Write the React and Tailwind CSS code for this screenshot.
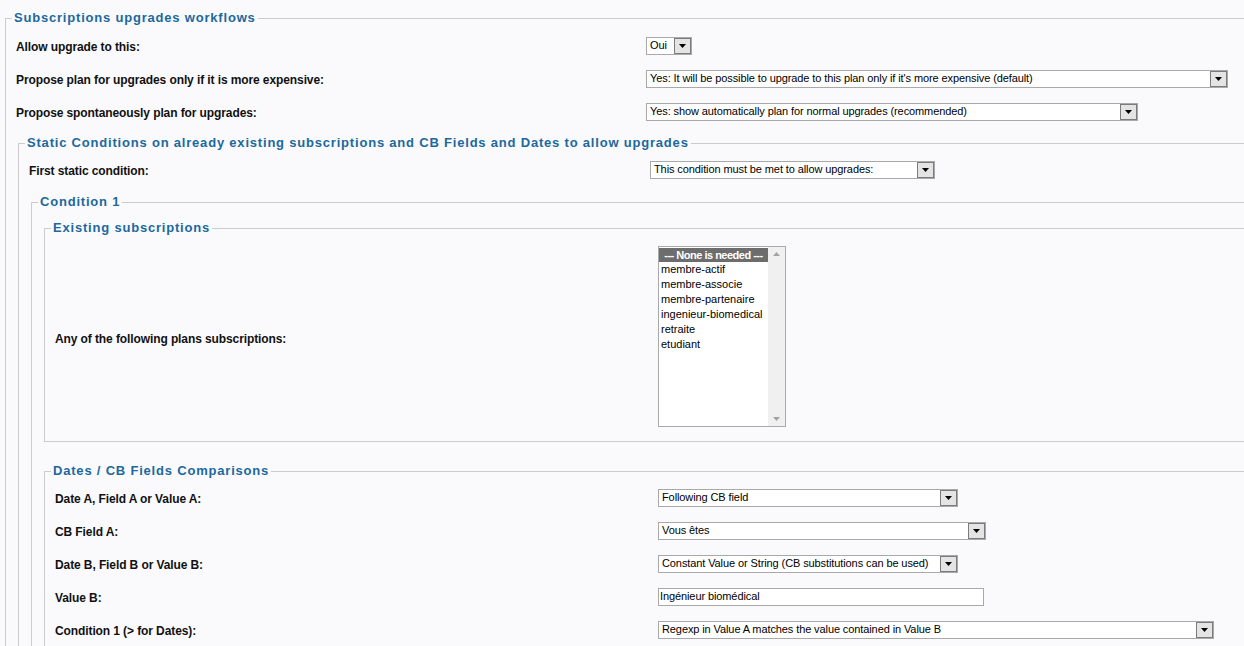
import React from 'react';

const Arrow = () => (
  <div className="absolute right-0 top-0 h-[16px] w-[17px] border border-[#7b7b7b] bg-[#e4e4e4] flex items-center justify-center">
    <svg width="7" height="4" viewBox="0 0 7 4"><polygon points="0,0 7,0 3.5,4" fill="#000" /></svg>
  </div>
);

const Select = ({ className, children }) => (
  <div className={`relative h-[18px] border border-[#a9a9a9] bg-white flex items-center pl-[3px] text-[11px] tracking-[-0.1px] text-black ${className}`}>
    <span className="whitespace-nowrap">{children}</span>
    <Arrow />
  </div>
);

const Row = ({ label, labelW, children }) => (
  <div className="flex items-center h-[33px]">
    <div className={`pl-[10px] pt-[2px] shrink-0 text-[12px] font-bold tracking-[-0.1px] text-[#111] ${labelW}`}>{label}</div>
    {children}
  </div>
);

const Box = ({ legend, className, children }) => (
  <fieldset className={`border border-[#cccccc] ${className}`}>
    <legend className="ml-[6px] px-[2px] text-[13px] leading-[16px] font-bold text-[#20689c] tracking-[0.8px]">{legend}</legend>
    {children}
  </fieldset>
);

const plans = ['membre-actif', 'membre-associe', 'membre-partenaire', 'ingenieur-biomedical', 'retraite', 'etudiant'];

export default function App() {
  return (
    <div className="h-[646px] w-full overflow-hidden bg-[#fafafc] pt-[10px] font-['Liberation_Sans',Arial,sans-serif]">
      <Box legend="Subscriptions upgrades workflows" className="ml-[5px] w-[1320px]">
        <div className="pt-[3px]">
          <Row label="Allow upgrade to this:" labelW="w-[640px]">
            <Select className="w-[46px]">Oui</Select>
          </Row>
          <Row label="Propose plan for upgrades only if it is more expensive:" labelW="w-[640px]">
            <Select className="w-[582px]">Yes: It will be possible to upgrade to this plan only if it's more expensive (default)</Select>
          </Row>
          <Row label="Propose spontaneously plan for upgrades:" labelW="w-[640px]">
            <Select className="w-[492px]">Yes: show automatically plan for normal upgrades (recommended)</Select>
          </Row>
        </div>

        <Box legend="Static Conditions on already existing subscriptions and CB Fields and Dates to allow upgrades" className="ml-[12px] mt-[7px]">
          <div className="pt-[2px]">
            <Row label="First static condition:" labelW="w-[631px]">
              <Select className="w-[285px]">This condition must be met to allow upgrades:</Select>
            </Row>
          </div>

          <Box legend="Condition 1" className="ml-[12px] mt-[8px]">
            <Box legend="Existing subscriptions" className="ml-[12px] mt-[10px]">
              <div className="flex items-center pt-[10px] pb-[14px]">
                <div className="pl-[10px] pt-[4px] w-[613px] shrink-0 text-[12px] font-bold tracking-[-0.1px] text-[#111]">Any of the following plans subscriptions:</div>
                <div className="relative w-[128px] h-[181px] border border-[#a9a9a9] bg-white flex">
                  <div className="flex-1 min-w-0 pt-px text-[11px] leading-[15px] text-black">
                    <div className="bg-[#6d6d6d] text-white font-bold text-center h-[14px] leading-[14px] tracking-[-0.5px] whitespace-nowrap overflow-hidden">--- None is needed ---</div>
                    {plans.map((p) => (
                      <div key={p} className="pl-[2px] whitespace-nowrap">{p}</div>
                    ))}
                  </div>
                  <div className="w-[17px] shrink-0 bg-[#f0f0f0] flex flex-col justify-between items-center py-[5px]">
                    <svg width="7" height="4" viewBox="0 0 7 4"><polygon points="0,4 7,4 3.5,0" fill="#a3a3a3" /></svg>
                    <svg width="7" height="4" viewBox="0 0 7 4"><polygon points="0,0 7,0 3.5,4" fill="#a3a3a3" /></svg>
                  </div>
                </div>
              </div>
            </Box>

            <Box legend="Dates / CB Fields Comparisons" className="ml-[12px] mt-[21px]">
              <div className="pt-[2px]">
                <Row label="Date A, Field A or Value A:" labelW="w-[613px]">
                  <Select className="w-[300px]">Following CB field</Select>
                </Row>
                <Row label="CB Field A:" labelW="w-[613px]">
                  <Select className="w-[328px]">Vous êtes</Select>
                </Row>
                <Row label="Date B, Field B or Value B:" labelW="w-[613px]">
                  <Select className="w-[300px]">Constant Value or String (CB substitutions can be used)</Select>
                </Row>
                <Row label="Value B:" labelW="w-[613px]">
                  <div className="h-[18px] w-[326px] border border-[#a9a9a9] bg-white flex items-center pl-[1px] text-[11px] tracking-[-0.1px] text-black">Ingénieur biomédical</div>
                </Row>
                <Row label="Condition 1 (> for Dates):" labelW="w-[613px]">
                  <Select className="w-[556px]">Regexp in Value A matches the value contained in Value B</Select>
                </Row>
              </div>
            </Box>
          </Box>
        </Box>
      </Box>
    </div>
  );
}
